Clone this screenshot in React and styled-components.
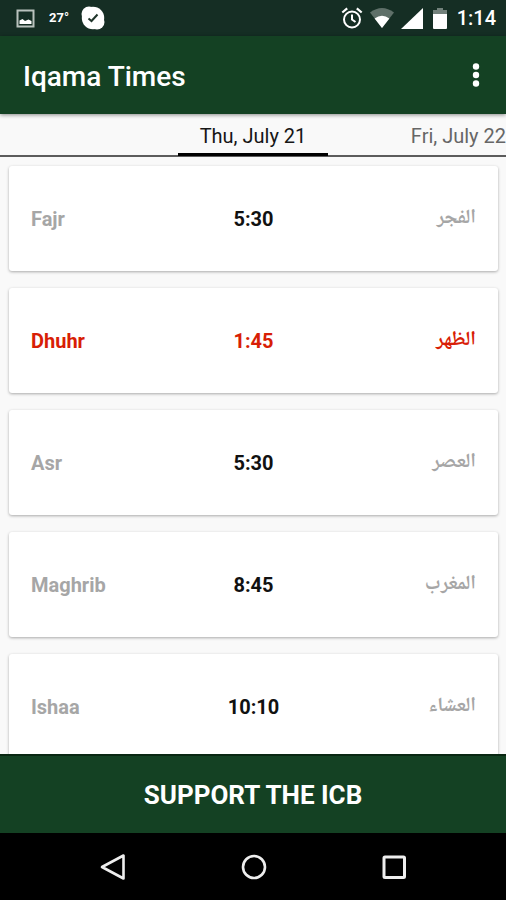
import React from "react";
import styled, { createGlobalStyle } from "styled-components";

const GlobalStyle = createGlobalStyle`
  *, *::before, *::after { box-sizing: border-box; }
  body {
    margin: 0;
    background: #000;
    font-family: Roboto, "Liberation Sans", sans-serif;
  }
  button { font: inherit; border: 0; padding: 0; background: none; cursor: pointer; }
`;

const Screen = styled.div`
  display: flex;
  flex-direction: column;
  height: 100vh;
  overflow: hidden;
  background: #f9f9f9;
`;

const StatusBar = styled.div`
  flex: none;
  display: flex;
  align-items: center;
  justify-content: space-between;
  height: 36px;
  padding: 0 10px 0 16px;
  background: #152e24;
  color: #fff;
`;

const StatusGroup = styled.div`
  display: flex;
  align-items: center;
  gap: ${(p) => p.$gap}px;
  svg { display: block; }
`;

const Temperature = styled.span`
  width: 20px;
  font-size: 13px;
  font-weight: 700;
  line-height: 20px;
  white-space: nowrap;
`;

const Clock = styled.span`
  font-size: 20px;
  font-weight: 500;
  line-height: 24px;
`;

const AppBar = styled.header`
  flex: none;
  z-index: 1;
  display: flex;
  align-items: center;
  justify-content: space-between;
  height: 78px;
  padding: 4px 20px 0 23px;
  background: #144123;
  box-shadow: 0 1px 4px rgba(0, 0, 0, 0.45);
`;

const Title = styled.h1`
  margin: 0;
  color: #fff;
  font-size: 28px;
  font-weight: 500;
  line-height: 36px;
`;

const MenuButton = styled.button`
  display: flex;
  justify-content: center;
  width: 20px;
  height: 28px;
`;

const TabStrip = styled.div`
  flex: none;
  display: grid;
  grid-template-columns: 1fr 150px 1fr;
  height: 43px;
  border-bottom: 2px solid #5c5c5c;
  background: #f9f9f9;
`;

const Tab = styled.button`
  height: 42px;
  padding-top: 4px;
  border-bottom: 3px solid ${(p) => (p.$active ? "#000" : "transparent")};
  color: ${(p) => (p.$active ? "#161616" : "#666")};
  font-size: 20px;
  line-height: 24px;
  text-align: ${(p) => (p.$active ? "center" : "right")};
  white-space: nowrap;
`;

const PrayerList = styled.ul`
  flex: 1;
  min-height: 0;
  display: flex;
  flex-direction: column;
  gap: 17px;
  margin: 0;
  padding: 9px 8px 0 9px;
  overflow: hidden;
  list-style: none;
`;

const PrayerCard = styled.li`
  flex: none;
  display: grid;
  grid-template-columns: 1fr auto 1fr;
  align-items: center;
  height: 105px;
  padding: 1px 22px 0;
  border-radius: 3px;
  background: #fff;
  box-shadow: 0 1px 3px rgba(0, 0, 0, 0.32);
  color: ${(p) => (p.$current ? "#d81e06" : "#a6a6a6")};
  font-size: 20px;
  font-weight: 700;
  line-height: 28px;
`;

const Time = styled.time`
  color: ${(p) => (p.$current ? "#d81e06" : "#111")};
`;

const ArabicName = styled.span`
  font-family: "Noto Naskh Arabic", "Noto Sans Arabic", "DejaVu Sans", sans-serif;
  justify-self: end;
`;

const SupportButton = styled.button`
  flex: none;
  z-index: 1;
  height: 79px;
  && { border-top: 2px solid #092712; background: #144123; }
  color: #fff;
  && { font-size: 26px; font-weight: 700; line-height: 32px; }
`;

const NavBar = styled.nav`
  flex: none;
  display: flex;
  align-items: center;
  justify-content: center;
  gap: 112px;
  height: 67px;
  padding-left: 2px;
  background: #000;
`;

const NavButton = styled.button`
  display: block;
  width: 28px;
  height: 28px;
  svg { display: block; }
`;

const PictureIcon = () => (
  <svg width="19" height="19" viewBox="0 0 19 19">
    <rect x="1.5" y="1.5" width="16" height="16" fill="none" stroke="#b9c2bd" strokeWidth="2" />
    <path d="M3.5 15V11.5L6.5 10L9 12L12.5 10.5L15.5 12V15Z" fill="#fff" />
  </svg>
);

const CheckBadgeIcon = () => (
  <svg width="24" height="24" viewBox="0 0 24 24">
    <circle cx="12" cy="12" r="11.2" fill="#fff" />
    <circle cx="8" cy="8" r="7.5" fill="#fff" />
    <circle cx="16" cy="16" r="7.5" fill="#fff" />
    <path d="M7.5 12.5L10.5 15L16.5 8.5" fill="none" stroke="#20352b" strokeWidth="2" />
  </svg>
);

const AlarmIcon = () => (
  <svg width="22" height="22" viewBox="0 0 22 22" fill="none" stroke="#fff">
    <circle cx="11" cy="12.5" r="8" strokeWidth="2" />
    <path d="M11 7.5V12.5L14.5 15" strokeWidth="2" />
    <path d="M1.3 5.5L6.2 1.4M20.7 5.5L15.8 1.4" strokeWidth="2.2" />
  </svg>
);

const WifiIcon = () => (
  <svg width="24" height="20" viewBox="0 0 24 20">
    <path d="M0 4.5Q12 -4.5 24 4.5L12 20Z" fill="#5f7069" />
    <path d="M4.6 10.4Q12 5 19.4 10.4L12 20Z" fill="#fff" />
  </svg>
);

const SignalIcon = () => (
  <svg width="22" height="21" viewBox="0 0 22 21">
    <path d="M22 0V21H0Z" fill="#fff" />
  </svg>
);

const BatteryIcon = () => (
  <svg width="14" height="21" viewBox="0 0 14 21">
    <path d="M4 0H10V2H14V6H0V2H4Z" fill="#72817b" />
    <path d="M0 6H14V20Q14 21 13 21H1Q0 21 0 20Z" fill="#fff" />
  </svg>
);

const prayers = [
  { name: "Fajr", time: "5:30", arabic: "الفجر" },
  { name: "Dhuhr", time: "1:45", arabic: "الظهر", current: true },
  { name: "Asr", time: "5:30", arabic: "العصر" },
  { name: "Maghrib", time: "8:45", arabic: "المغرب" },
  { name: "Ishaa", time: "10:10", arabic: "العشاء" },
];

export default function App() {
  return (
    <Screen>
      <GlobalStyle />
      <StatusBar>
        <StatusGroup $gap={14}>
          <PictureIcon />
          <StatusGroup $gap={12}>
            <Temperature>27°</Temperature>
            <CheckBadgeIcon />
          </StatusGroup>
        </StatusGroup>
        <StatusGroup $gap={10}>
          <StatusGroup $gap={7}>
            <AlarmIcon />
            <WifiIcon />
            <SignalIcon />
          </StatusGroup>
          <BatteryIcon />
          <Clock>1:14</Clock>
        </StatusGroup>
      </StatusBar>
      <AppBar>
        <Title>Iqama Times</Title>
        <MenuButton aria-label="More options">
          <svg width="8" height="24" viewBox="0 0 8 24" fill="#fff">
            <circle cx="4" cy="3.5" r="3.2" />
            <circle cx="4" cy="12" r="3.2" />
            <circle cx="4" cy="20.5" r="3.2" />
          </svg>
        </MenuButton>
      </AppBar>
      <TabStrip role="tablist" aria-label="Day">
        <span />
        <Tab role="tab" aria-selected="true" $active>Thu, July 21</Tab>
        <Tab role="tab" aria-selected="false">Fri, July 22</Tab>
      </TabStrip>
      <PrayerList>
        {prayers.map((p) => (
          <PrayerCard key={p.name} $current={p.current}>
            <span>{p.name}</span>
            <Time $current={p.current}>{p.time}</Time>
            <ArabicName lang="ar" dir="rtl">{p.arabic}</ArabicName>
          </PrayerCard>
        ))}
      </PrayerList>
      <SupportButton>SUPPORT THE ICB</SupportButton>
      <NavBar aria-label="System">
        <NavButton aria-label="Back">
          <svg width="28" height="28" viewBox="0 0 28 28" fill="none" stroke="#eee" strokeWidth="2.6" strokeLinejoin="round">
            <path d="M23.5 2.5V25.5L2 14Z" />
          </svg>
        </NavButton>
        <NavButton aria-label="Home">
          <svg width="28" height="28" viewBox="0 0 28 28" fill="none" stroke="#eee" strokeWidth="2.6">
            <circle cx="14" cy="14" r="11" />
          </svg>
        </NavButton>
        <NavButton aria-label="Recent apps">
          <svg width="28" height="28" viewBox="0 0 28 28" fill="none" stroke="#eee" strokeWidth="3">
            <rect x="4" y="4" width="20.5" height="20.5" rx="1" />
          </svg>
        </NavButton>
      </NavBar>
    </Screen>
  );
}
